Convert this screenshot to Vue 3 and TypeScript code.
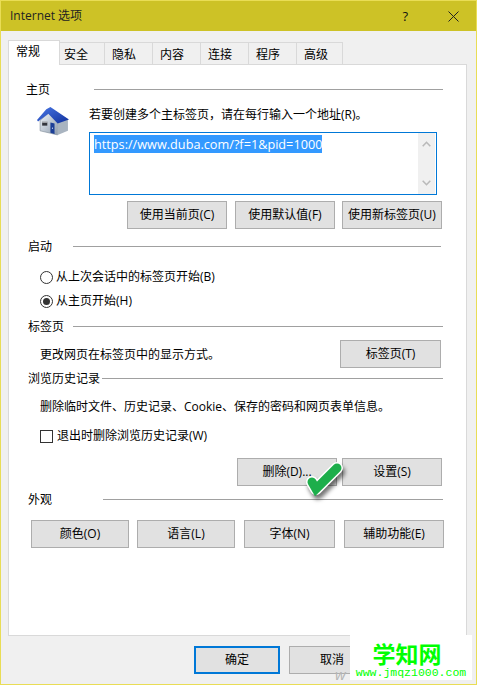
<script setup lang="ts">
const tabs: { label: string; width: number }[] = [
  { label: '常规', width: 52 },
  { label: '安全', width: 46 },
  { label: '隐私', width: 49 },
  { label: '内容', width: 49 },
  { label: '连接', width: 49 },
  { label: '程序', width: 49 },
  { label: '高级', width: 47 },
]
</script>

<template>
  <div class="window">
    <header class="titlebar">
      <span class="title">Internet 选项</span>
      <span class="help">?</span>
      <svg class="close" width="11" height="11" viewBox="0 0 11 11">
        <path d="M.5.5l10 10M10.500.5l-10 10" fill="none" stroke="#222" stroke-width="1" />
      </svg>
    </header>

    <nav class="tabs">
      <div
        v-for="(t, i) in tabs"
        :key="t.label"
        class="tab"
        :class="{ active: i === 0 }"
        :style="{ width: t.width + 'px' }"
      >{{ t.label }}</div>
    </nav>

    <main class="panel">
      <section class="heading home-head"><span>主页</span><i class="line l-home"></i></section>
      <div class="intro">
        <svg class="house" width="33" height="30" viewBox="0 0 32 29">
          <defs>
            <linearGradient id="wall" x1="0" y1="0" x2="1" y2="1">
              <stop offset="0" stop-color="#eef3f8" />
              <stop offset="1" stop-color="#8e9cad" />
            </linearGradient>
            <linearGradient id="roof" x1="0" y1="0" x2="1" y2="1">
              <stop offset="0" stop-color="#4a78e6" />
              <stop offset="1" stop-color="#10309c" />
            </linearGradient>
          </defs>
          <path d="M3 14 L11 7 L20 15 L20 28 L3 24Z" fill="url(#wall)" stroke="#7f8b99" stroke-width=".6" />
          <path d="M20 15 L30 13 L30 24 L20 28Z" fill="#a9b4c0" />
          <path d="M9 3 L13 1 L31 13 L20 17 L11 7.500 L1 15 L0 13.500Z" fill="url(#roof)" />
          <rect x="5" y="15" width="5" height="4" fill="#33363d" />
          <rect x="5" y="15" width="5" height="1" fill="#eef2f6" />
          <path d="M13 16 L17 17 L17 27 L13 26Z" fill="#1d3f97" />
          <circle cx="15" cy="21.500" r=".6" fill="#dfe7f5" />
        </svg>
        <span class="intro-text">若要创建多个主标签页，请在每行输入一个地址(R)。</span>
      </div>
      <div class="urlbox">
        <div class="url"><span class="sel">https://www.duba.com/?f=1&amp;pid=1000</span></div>
        <div class="scroll">
          <svg width="9" height="6" viewBox="0 0 9 6"><path d="M.7 5.200L4.500 1.300l3.800 3.900" fill="none" stroke="#b9b9b9" stroke-width="1.600" /></svg>
          <svg width="9" height="6" viewBox="0 0 9 6"><path d="M.7.800l3.800 3.900L8.300.800" fill="none" stroke="#b9b9b9" stroke-width="1.600" /></svg>
        </div>
      </div>
      <div class="btnrow home-btns">
        <button class="btn w100 wide-gap">使用当前页(C)</button>
        <button class="btn w100">使用默认值(F)</button>
        <button class="btn w100">使用新标签页(U)</button>
      </div>

      <section class="heading sub start-head"><span>启动</span><i class="line l-start"></i></section>
      <label class="option first"><i class="radio"></i>从上次会话中的标签页开始(B)</label>
      <label class="option second"><i class="radio on"></i>从主页开始(H)</label>

      <section class="heading sub tabs-head"><span>标签页</span><i class="line l-tabs"></i></section>
      <div class="tabs-row">
        <span class="tabs-note">更改网页在标签页中的显示方式。</span>
        <button class="btn w101">标签页(T)</button>
      </div>

      <section class="heading sub hist-head"><span>浏览历史记录</span><i class="line l-hist"></i></section>
      <p class="note">删除临时文件、历史记录、Cookie、保存的密码和网页表单信息。</p>
      <label class="option exit"><i class="check"></i>退出时删除浏览历史记录(W)</label>
      <div class="btnrow hist-btns">
        <button class="btn w100">删除(D)...</button>
        <button class="btn w100">设置(S)</button>
      </div>

      <section class="heading sub look-head"><span>外观</span><i class="line l-look"></i></section>
      <div class="look-btns">
        <button class="btn w98 tight">颜色(O)</button>
        <button class="btn w98">语言(L)</button>
        <button class="btn w91">字体(N)</button>
        <button class="btn w100">辅助功能(E)</button>
      </div>
    </main>

    <footer class="footer">
      <button class="btn w86 default">确定</button>
      <button class="btn w86">取消</button>
    </footer>

    <svg class="tick" width="44" height="46" viewBox="0 0 44 46">
      <path d="M9 26 L13 33 L34 12" fill="none" stroke="#fff" stroke-width="12" stroke-linecap="round" stroke-linejoin="round" />
      <path d="M9 26 L13 33 L34 12" fill="none" stroke="#1dae4b" stroke-width="9" stroke-linecap="round" stroke-linejoin="miter" />
    </svg>

    <span class="ghost">w</span>
    <aside class="mark">
      <strong>学知网</strong>
      <span>www.jmqz1000.com</span>
    </aside>
  </div>
</template>

<style>
html, body { margin: 0; }
</style>

<style scoped>
.window {
  position: relative;
  box-sizing: border-box;
  width: 477px;
  height: 685px;
  overflow: hidden;
  border: 1px solid #e9dd55;
  background: #f0f0f0;
  color: #000;
  font: 12px/16px "Open Sans", "Noto Sans CJK SC", sans-serif;
}
.titlebar {
  display: flex;
  align-items: center;
  height: 30px;
  background: #cdc226;
  padding: 0 17px 0 9px;
}
.title { flex: 1; font-size: 12px; color: #222; }
.help { font-size: 13px; margin-right: 40px; color: #111; }
.tabs {
  display: flex;
  align-items: flex-end;
  height: 24px;
  margin: 9px 0 0 7px;
}
.tab {
  box-sizing: border-box;
  height: 22px;
  margin-right: -1px;
  padding-left: 7px;
  border: 1px solid #d9d9d9;
  border-bottom: 0;
  line-height: 23px;
}
.tab:nth-child(2) { padding-left: 4px; }
.tab.active {
  position: relative;
  z-index: 1;
  height: 25px;
  margin-bottom: -1px;
  padding-left: 7px;
  background: #fff;
  line-height: 21px;
}
.panel {
  box-sizing: border-box;
  width: 459px;
  height: 572px;
  margin-left: 7px;
  padding: 17px 23px 0 17px;
  border: 1px solid #d9d9d9;
  background: #fff;
}
.heading {
  display: flex;
  align-items: center;
  height: 16px;
}
.heading.sub { padding-left: 2px; }
.line {
  flex: 1;
  height: 1px;
  background: #a0a0a0;
  margin-top: -1px;
}
.l-home { margin-left: 44px; }
.l-start { margin-left: 21px; margin-right: 2px; }
.l-tabs { margin-left: 9px; }
.l-hist { margin-left: 2px; }
.l-look { margin-left: 51px; }
.intro {
  display: flex;
  align-items: flex-start;
  margin-top: 8px;
  padding-left: 11px;
  height: 26px;
}
.house { flex: none; }
.intro-text { margin: 1px 0 0 19px; }
.urlbox {
  box-sizing: border-box;
  display: flex;
  justify-content: space-between;
  width: 348px;
  height: 63px;
  margin: 0 0 0 63px;
  border: 1px solid #0078d7;
  padding: 0 1px 0 4px;
}
.url { padding-top: 3px; font-size: 12.700px; line-height: 16px; }
.sel { background: #3399ff; color: #fff; }
.scroll {
  display: flex;
  flex-direction: column;
  justify-content: space-between;
  align-items: center;
  box-sizing: border-box;
  width: 17px;
  padding: 8px 0;
  background: #f0f0f0;
}
.btnrow { display: flex; justify-content: flex-end; gap: 7px; }
.home-btns { margin: 6px 1px 0 0; }
.wide-gap { margin-right: 1px; }
.btn {
  box-sizing: border-box;
  height: 28px;
  padding: 0;
  border: 1px solid #adadad;
  background: #e1e1e1;
  color: #000;
  font: inherit;
}
.w100 { width: 100px; }
.w101 { width: 101px; }
.w98 { width: 98px; }
.w91 { width: 91px; }
.w86 { width: 86px; }
.default { border: 2px solid #0078d7; }
.start-head { margin-top: 10px; }
.option {
  display: flex;
  align-items: center;
  height: 16px;
  padding-left: 14px;
}
.first { margin-top: 14px; }
.second { margin-top: 8px; }
.radio {
  position: relative;
  box-sizing: border-box;
  width: 13px;
  height: 13px;
  margin-right: 3px;
  border: 1px solid #333;
  border-radius: 50%;
}
.radio.on::after {
  content: "";
  position: absolute;
  inset: 2px;
  border-radius: 50%;
  background: #333;
}
.tabs-head { margin-top: 10px; }
.tabs-row {
  display: flex;
  align-items: center;
  justify-content: space-between;
  height: 28px;
  margin-top: 5px;
  padding-left: 14px;
  margin-right: 2px;
}
.tabs-note { padding-top: 1px; }
.hist-head { margin-top: 3px; }
.note { margin: 12px 0 0 14px; }
.exit { margin-top: 13px; }
.check {
  box-sizing: border-box;
  width: 13px;
  height: 13px;
  margin-right: 4px;
  border: 1px solid #333;
}
.hist-btns { gap: 5px; margin: 14px 1px 0 0; }
.look-head { margin-top: 6px; }
.look-btns {
  display: flex;
  gap: 9px;
  margin: 12px -1px 0 5px;
}
.tight { margin-right: -1px; }
.footer {
  display: flex;
  gap: 9px;
  margin: 10px 0 0 193px;
}
.tick {
  position: absolute;
  left: 302px;
  top: 455px;
  filter: drop-shadow(2px 4px 2px rgba(0, 0, 0, .55));
}
.ghost {
  position: absolute;
  left: 334px;
  top: 668px;
  font-size: 15px;
  line-height: 10px;
  font-style: italic;
  color: #b5b5b5;
}
.mark {
  position: absolute;
  left: 349px;
  top: 634px;
  width: 122px;
  height: 45px;
  background: #fff;
  color: #00ff00;
  display: flex;
  flex-direction: column;
  align-items: center;
}
.mark strong {
  font: 700 23px/22px "Noto Sans CJK SC", sans-serif;
  margin: 7px 8px 0 0;
}
.mark span {
  font: 11.500px/12px "Liberation Mono", monospace;
  margin-top: 3px;
}
</style>
